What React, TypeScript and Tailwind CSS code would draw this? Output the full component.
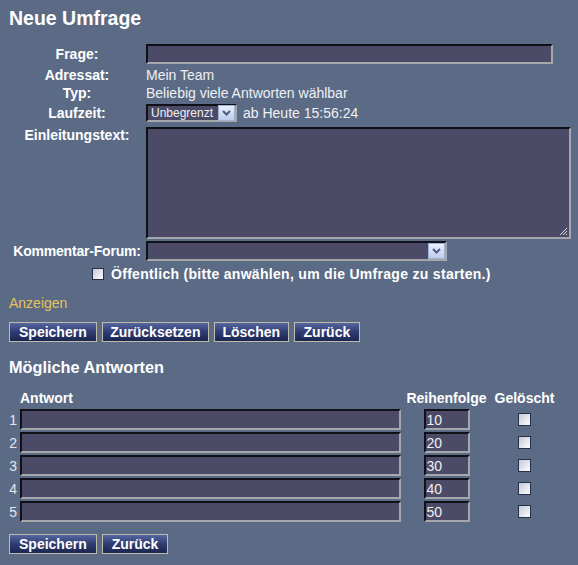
import React from "react";

const field =
  "bg-[#4b4a67] border-2 border-t-[#101018] border-l-[#101018] border-b-[#a5a7ab] border-r-[#a5a7ab]";

function Arrow() {
  return (
    <div className="w-[17px] h-[16px] bg-linear-to-b from-[#e8effc] to-[#bfcdec] border border-[#9db0d6] flex items-center justify-center">
      <svg width="9" height="6" viewBox="0 0 9 6">
        <path d="M1 1 L4.5 4.5 L8 1" stroke="#4a5c88" strokeWidth="2" fill="none" />
      </svg>
    </div>
  );
}

function Btn({ children, narrow = false }: { children: React.ReactNode; narrow?: boolean }) {
  return (
    <div
      className={
        (narrow ? "px-[7.5px] " : "px-[9px] ") +
        "h-[20px] border border-[#bdbcaa] bg-linear-to-b from-[#5666a0] via-[#2f3d72] to-[#1c2550] text-white font-bold leading-[18px] text-[14px] flex items-center"
      }
    >
      {children}
    </div>
  );
}

function Check({ size = 12 }: { size?: number }) {
  return (
    <div
      className={
        (size === 12 ? "w-[12px] h-[12px] " : "w-[13px] h-[13px] ") +
        "border border-[#26304a] bg-linear-to-br from-[#c2c8d6] to-[#ffffff]"
      }
    />
  );
}

export default function App() {
  const rows = [
    { n: "1", o: "10" },
    { n: "2", o: "20" },
    { n: "3", o: "30" },
    { n: "4", o: "40" },
    { n: "5", o: "50" },
  ];
  return (
    <div className="w-[578px] h-[565px] overflow-hidden bg-[#5b6b86] text-white text-[14px] font-['Liberation_Sans',Arial,sans-serif]">
      <div className="pl-[9px] pt-[7px] text-[19.5px] leading-[22px] font-bold">Neue Umfrage</div>

      <div className="mt-[14px]">
        {/* Frage */}
        <div className="flex items-start h-[23px]">
          <div className="ml-[10px] w-[134px] mt-[1px] text-center font-bold leading-[20px]">Frage:</div>
          <div className={"ml-[2px] mt-[1px] h-[20px] w-[407px] " + field} />
        </div>
        {/* Adressat */}
        <div className="flex h-[18px] leading-[18px]">
          <div className="ml-[10px] w-[134px] text-center font-bold">Adressat:</div>
          <div className="ml-[2px] text-[#eef0f4]">Mein Team</div>
        </div>
        {/* Typ */}
        <div className="flex h-[18px] leading-[18px]">
          <div className="ml-[10px] w-[134px] text-center font-bold">Typ:</div>
          <div className="ml-[2px] text-[#eef0f4]">Beliebig viele Antworten wählbar</div>
        </div>
        {/* Laufzeit */}
        <div className="flex items-center h-[22px] leading-[22px]">
          <div className="ml-[10px] w-[134px] text-center font-bold">Laufzeit:</div>
          <div className={"ml-[2px] h-[18px] w-[91px] flex items-center justify-between " + field}>
            <span className="pl-[3px] text-[12px] leading-[14px] text-[#eef0f4]">Unbegrenzt</span>
            <Arrow />
          </div>
          <div className="ml-[6px] text-[#eef0f4]">ab Heute 15:56:24</div>
        </div>
        {/* Einleitungstext */}
        <div className="flex items-start pt-[3px]">
          <div className="ml-[10px] w-[134px] text-center font-bold leading-[16px]">Einleitungstext:</div>
          <div className={"relative ml-[2px] h-[112px] w-[425px] " + field}>
            <svg className="absolute right-[1px] bottom-[1px]" width="10" height="10" viewBox="0 0 10 10">
              <path d="M9 2 L2 9 M9 5 L5 9 M9 8 L8 9" stroke="#d8dbe2" strokeWidth="1" />
            </svg>
          </div>
        </div>
        {/* Kommentar-Forum */}
        <div className="flex items-start mt-[2px] h-[20px]">
          <div className="ml-[10px] w-[134px] text-center font-bold leading-[20px] tracking-[-0.2px]">Kommentar-Forum:</div>
          <div className={"ml-[2px] h-[20px] w-[301px] flex items-center justify-end " + field}>
            <Arrow />
          </div>
        </div>
        {/* Öffentlich */}
        <div className="flex items-start mt-[3px] h-[20px] pl-[92px]">
          <div className="mt-[4px]">
            <Check />
          </div>
          <div className="ml-[7px] font-bold leading-[20px] tracking-[0.3px]">
            Öffentlich (bitte anwählen, um die Umfrage zu starten.)
          </div>
        </div>
      </div>

      <div className="mt-[11px] pl-[9px] leading-[16px] text-[#e6c35c]">Anzeigen</div>

      <div className="mt-[11px] pl-[9px] flex gap-[5px]">
        <Btn>Speichern</Btn>
        <Btn narrow>Zurücksetzen</Btn>
        <Btn narrow>Löschen</Btn>
        <Btn>Zurück</Btn>
      </div>

      <div className="mt-[15px] pl-[9px] text-[16.3px] leading-[20px] font-bold">Mögliche Antworten</div>

      <div className="mt-[13px]">
        <div className="flex leading-[16px] font-bold">
          <div className="w-[20px]" />
          <div className="w-[381px]">Antwort</div>
          <div className="ml-[3px] w-[85px] text-center">Reihenfolge</div>
          <div className="ml-[4px] w-[63px] text-center">Gelöscht</div>
        </div>
        <div className="mt-[3px] flex flex-col gap-[2px]">
          {rows.map((r) => (
            <div key={r.n} className="flex items-center h-[21px]">
              <div className="ml-[9px] w-[10px] pr-[2px] text-right text-[#e2e6ec] leading-[16px]">{r.n}</div>
              <div className={"ml-[1px] h-[21px] w-[381px] " + field} />
              <div className="ml-[3px] w-[85px] flex justify-center">
                <div className={"h-[21px] w-[46px] flex items-center " + field}>
                  <span className="pl-[1px] leading-[16px] text-[#eef0f4]">{r.o}</span>
                </div>
              </div>
              <div className="ml-[4px] w-[63px] flex justify-center">
                <Check size={13} />
              </div>
            </div>
          ))}
        </div>
      </div>

      <div className="mt-[12px] pl-[9px] flex gap-[5px]">
        <Btn>Speichern</Btn>
        <Btn>Zurück</Btn>
      </div>
    </div>
  );
}
